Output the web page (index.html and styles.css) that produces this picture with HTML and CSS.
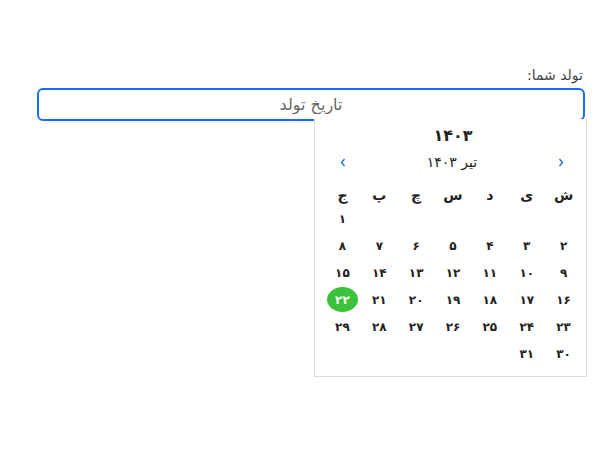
FILE: index.html
```html
<!DOCTYPE html>
<html lang="fa" dir="rtl">
<head>
<meta charset="utf-8">
<link rel="stylesheet" href="styles.css">
</head>
<body>
<div class="page">
  <label class="label">تولد شما:</label>
  <div class="field">
    <input class="input" type="text" placeholder="تاریخ تولد">
    <div class="picker">
      <div class="year">۱۴۰۳</div>
      <div class="nav">
        <span class="arrow"><svg width="6" height="9" viewBox="0 0 6 9"><path d="M1.5 1 L4.5 4.5 L1.5 8" fill="none" stroke="#1a73e8" stroke-width="1.4"/></svg></span>
        <span class="month">تیر ۱۴۰۳</span>
        <span class="arrow"><svg width="6" height="9" viewBox="0 0 6 9"><path d="M4.5 1 L1.5 4.5 L4.5 8" fill="none" stroke="#1a73e8" stroke-width="1.4"/></svg></span>
      </div>
      <div class="grid">
        <div class="dn">ش</div><div class="dn">ی</div><div class="dn">د</div><div class="dn">س</div><div class="dn">چ</div><div class="dn">پ</div><div class="dn">ج</div>
        <div></div><div></div><div></div><div></div><div></div><div></div><div class="d">۱</div>
        <div class="d">۲</div><div class="d">۳</div><div class="d">۴</div><div class="d">۵</div><div class="d">۶</div><div class="d">۷</div><div class="d">۸</div>
        <div class="d">۹</div><div class="d">۱۰</div><div class="d">۱۱</div><div class="d">۱۲</div><div class="d">۱۳</div><div class="d">۱۴</div><div class="d">۱۵</div>
        <div class="d">۱۶</div><div class="d">۱۷</div><div class="d">۱۸</div><div class="d">۱۹</div><div class="d">۲۰</div><div class="d">۲۱</div><div class="d"><span class="today">۲۲</span></div>
        <div class="d">۲۳</div><div class="d">۲۴</div><div class="d">۲۵</div><div class="d">۲۶</div><div class="d">۲۷</div><div class="d">۲۸</div><div class="d">۲۹</div>
        <div class="d">۳۰</div><div class="d">۳۱</div>
      </div>
    </div>
  </div>
</div>
</body>
</html>
```
FILE: styles.css
```css
* { box-sizing: border-box; }
html, body { margin: 0; padding: 0; background: #fff; }
body { font-family: "DejaVu Sans", "Noto Sans", sans-serif; color: #222; }
.page { padding: 66px 15px 20px 37px; }
.label { display: block; font-size: 14px; color: #444; line-height: 18px; padding-right: 2px; margin-bottom: 4px; }
.field { display: flex; flex-direction: column; align-items: flex-start; }
.input {
  display: block; width: 100%; height: 33px;
  border: 2px solid #1a6ef5; border-radius: 6px;
  font-family: inherit; font-size: 16px; text-align: center; color: #555;
  outline: none; background: #fff; padding: 0;
}
.input::placeholder { color: #666; }
.picker {
  width: 273px; height: 258px; margin-top: -2px; margin-right: -2px;
  background: #fff; border: 1px solid #dcdcdc; border-top: none;
  padding: 7px 4px 0 9px;
}
.year { text-align: center; font-weight: bold; font-size: 16px; line-height: 20px; }
.nav { display: flex; justify-content: space-between; align-items: center; height: 22px; margin-top: 5px; padding: 0 18px 0 16px; }
.arrow { display: flex; align-items: center; }
.month { font-size: 14px; color: #222; }
.grid { display: grid; grid-template-columns: repeat(7, 1fr); grid-template-rows: 22px; grid-auto-rows: 27px; margin-top: 10px; }
.dn { text-align: center; font-weight: bold; font-size: 14px; line-height: 20px; padding-top: 2px; }
.d { display: flex; align-items: center; justify-content: center; font-size: 12px; font-weight: bold; color: #222; }
.today { display: flex; align-items: center; justify-content: center; width: 31px; height: 25px; border-radius: 50%; background: #3cc13b; color: #fff; }
```
